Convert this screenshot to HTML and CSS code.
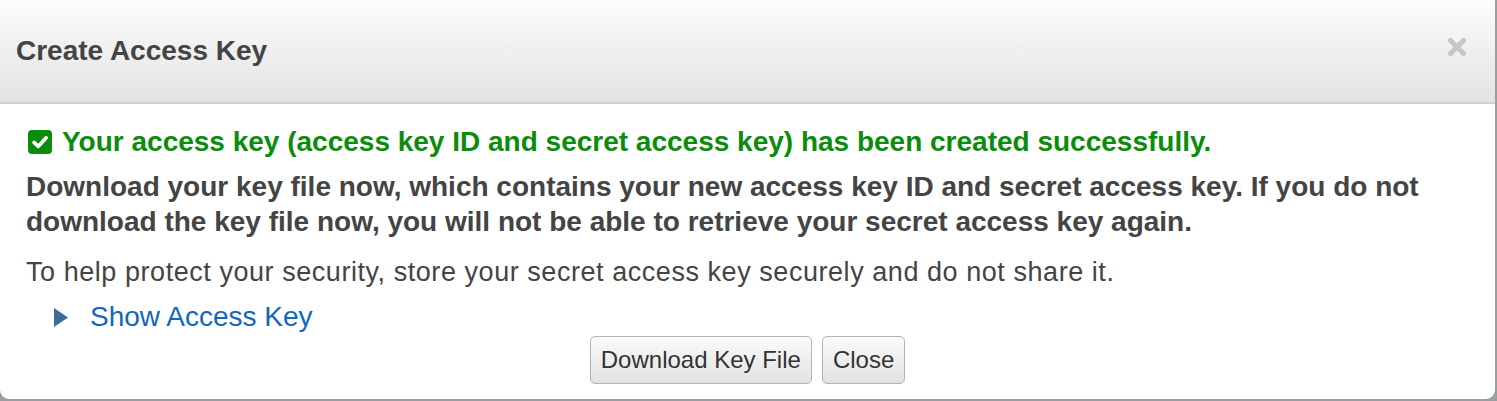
FILE: index.html
```html
<!DOCTYPE html>
<html>
<head>
<meta charset="utf-8">
<link rel="stylesheet" href="styles.css">
</head>
<body>
<div class="page">
  <div class="dialog">
    <div class="header">
      <h1 class="title">Create Access Key</h1>
      <span class="close-x">
        <svg width="20" height="20" viewBox="0 0 20 20"><path d="M3.5 3.5 L16.5 16.5 M16.5 3.5 L3.5 16.5" stroke="#c6c6c6" stroke-width="5" stroke-linecap="round"/></svg>
      </span>
    </div>
    <div class="body">
      <p class="success">
        <svg class="check" width="24" height="24" viewBox="0 0 24 24"><rect x="0" y="0" width="24" height="24" rx="4" fill="#0b8c0b"/><path d="M6 12.4 L10.2 16.4 L18.2 7.8" stroke="#fff" stroke-width="3.6" fill="none" stroke-linecap="round" stroke-linejoin="round"/></svg>
        <span>Your access key (access key ID and secret access key) has been created successfully.</span>
      </p>
      <p class="warning">Download your key file now, which contains your new access key ID and secret access key. If you do not download the key file now, you will not be able to retrieve your secret access key again.</p>
      <p class="info">To help protect your security, store your secret access key securely and do not share it.</p>
      <div class="toggle">
        <svg class="tri" width="14" height="19" viewBox="0 0 14 19"><path d="M0 0 L14 9.5 L0 19 Z" fill="#3f6b98"/></svg>
        <a class="show-link">Show Access Key</a>
      </div>
      <div class="actions">
        <button class="btn btn-download">Download Key File</button>
        <button class="btn btn-close">Close</button>
      </div>
    </div>
  </div>
</div>
</body>
</html>
```

FILE: styles.css
```css
html, body {
  margin: 0;
  padding: 0;
  background: #9b9fa2;
  font-family: "Liberation Sans", Arial, Helvetica, sans-serif;
}
.page {
  width: 1497px;
  height: 401px;
  overflow: hidden;
}
.dialog {
  width: 1495px;
  height: 399px;
  background: #fff;
  border-radius: 0 0 9px 9px;
  overflow: hidden;
}
.header {
  height: 104px;
  box-sizing: border-box;
  border-bottom: 2px solid #cfcfcf;
  background: linear-gradient(#fcfcfc, #e3e3e3);
  display: flex;
  align-items: center;
  justify-content: space-between;
  padding: 0 28px 0 16px;
}
.title {
  margin: 0;
  font-size: 28px;
  line-height: 32px;
  font-weight: bold;
  color: #444;
}
.close-x {
  display: flex;
  margin-bottom: 8px;
}
.body {
  padding: 22px 26px 0 26px;
}
.success {
  margin: 0;
  display: flex;
  align-items: center;
  gap: 10px;
  color: #0c8c0c;
  font-size: 28px;
  font-weight: bold;
  line-height: 32px;
}
.success .check {
  margin-left: 2px;
  flex: none;
}
.warning {
  margin: 11px 0 0 0;
  color: #444;
  font-size: 28px;
  font-weight: bold;
  line-height: 35px;
}
.info {
  margin: 18px 0 0 0;
  color: #444;
  font-size: 27px;
  letter-spacing: 0.55px;
  line-height: 30px;
}
.toggle {
  display: flex;
  align-items: center;
  gap: 22px;
  margin: 15px 0 0 28px;
  height: 30px;
}
.show-link {
  color: #1167b8;
  font-size: 28px;
  line-height: 30px;
}
.actions {
  display: flex;
  justify-content: center;
  gap: 10px;
  margin-top: 4px;
}
.btn {
  height: 48px;
  padding: 0 10px;
  border: 1px solid #b4b4b4;
  border-radius: 5px;
  background: linear-gradient(#fbfbfb, #e2e2e2);
  color: #333;
  font-family: "Liberation Sans", Arial, Helvetica, sans-serif;
  font-size: 24px;
}
```
